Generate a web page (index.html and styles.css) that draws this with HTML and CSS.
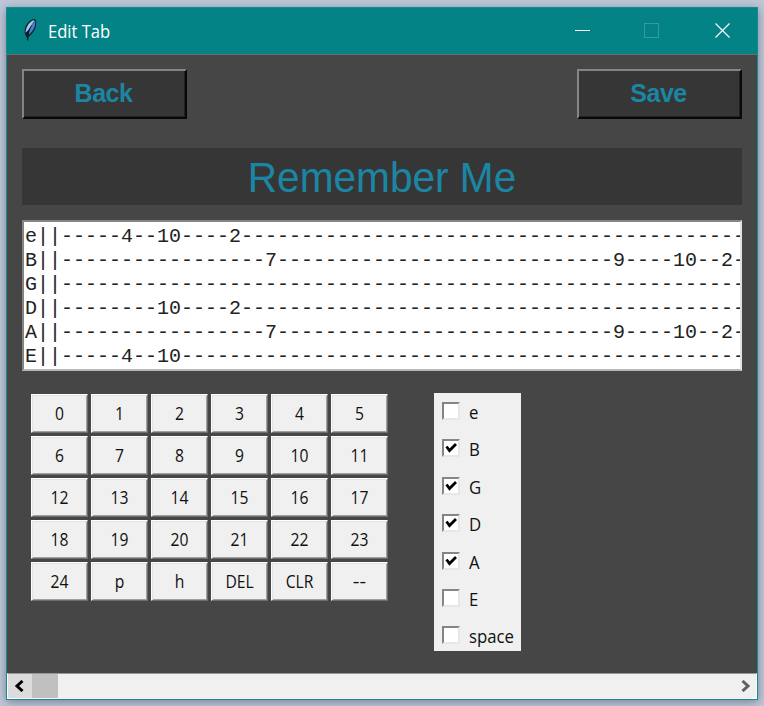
FILE: index.html
```html
<!DOCTYPE html>
<html lang="en">
<head>
<meta charset="utf-8">
<title>Edit Tab</title>
<link rel="stylesheet" href="styles.css">
</head>
<body>
<div class="window">
  <header class="titlebar">
    <svg class="feather" width="16" height="26" viewBox="0 0 16 26">
      <path d="M13 2 C15.500 4 14 12 11 15.500 C9 18 7.500 19 6.500 20 L6 25 L4.500 20 C2 17 2 11 5 7 C7 4 9.500 2 13 2Z" fill="#122330"/>
      <path d="M12.500 3 C8 4 4 9 3.500 15.500 C6 14 10 8 12.500 3Z" fill="#a9cbea"/>
      <path d="M13 3.500 C14 8 11.500 14 7 17.500 C7 12 9.500 8 13 3.500Z" fill="#4580d0"/>
      <path d="M10 8 C7.500 12 5.500 16 5.500 23" fill="none" stroke="#101820" stroke-width=".8"/>
    </svg>
    <span class="caption">Edit Tab</span>
    <svg class="controls" width="157" height="16" viewBox="0 0 157 16" fill="none">
      <path d="M0 7.500H15" stroke="#fff"/>
      <rect x="69.500" y=".5" width="14" height="14" stroke="#359c9e"/>
      <path d="M140.500 .5L154.500 14.500M154.500 .5L140.500 14.500" stroke="#fff" stroke-width="1.200"/>
    </svg>
  </header>
  <main class="content">
    <div class="actions">
      <button class="action">Back</button>
      <button class="action">Save</button>
    </div>
    <h1 class="song"><span>Remember Me</span></h1>
    <pre class="tab">e||-----4--10----2------------------------------------------
B||-----------------7----------------------------9----10--2-
G||---------------------------------------------------------
D||--------10----2------------------------------------------
A||-----------------7----------------------------9----10--2-
E||-----4--10-----------------------------------------------</pre>
    <div class="editor">
      <div class="keypad">
        <button><span>0</span></button><button><span>1</span></button><button><span>2</span></button><button><span>3</span></button><button><span>4</span></button><button><span>5</span></button>
        <button><span>6</span></button><button><span>7</span></button><button><span>8</span></button><button><span>9</span></button><button><span>10</span></button><button><span>11</span></button>
        <button><span>12</span></button><button><span>13</span></button><button><span>14</span></button><button><span>15</span></button><button><span>16</span></button><button><span>17</span></button>
        <button><span>18</span></button><button><span>19</span></button><button><span>20</span></button><button><span>21</span></button><button><span>22</span></button><button><span>23</span></button>
        <button><span>24</span></button><button><span>p</span></button><button><span>h</span></button><button><span>DEL</span></button><button><span>CLR</span></button><button><span class="dashes">--</span></button>
      </div>
      <div class="strings">
        <div class="string"><i class="box"></i><span>e</span></div>
        <div class="string"><i class="box"><svg viewBox="0 0 14 14"><path d="M2.500 5.500L5.500 9.500L12 3"/></svg></i><span>B</span></div>
        <div class="string"><i class="box"><svg viewBox="0 0 14 14"><path d="M2.500 5.500L5.500 9.500L12 3"/></svg></i><span>G</span></div>
        <div class="string"><i class="box"><svg viewBox="0 0 14 14"><path d="M2.500 5.500L5.500 9.500L12 3"/></svg></i><span>D</span></div>
        <div class="string"><i class="box"><svg viewBox="0 0 14 14"><path d="M2.500 5.500L5.500 9.500L12 3"/></svg></i><span>A</span></div>
        <div class="string"><i class="box"></i><span>E</span></div>
        <div class="string"><i class="box"></i><span>space</span></div>
      </div>
    </div>
  </main>
  <footer class="scrollbar">
    <div class="arrow left"><svg width="10" height="12" viewBox="0 0 10 12"><path d="M8.500 1L3 6L8.500 11"/></svg></div>
    <div class="thumb"></div>
    <div class="arrow right"><svg width="10" height="12" viewBox="0 0 10 12"><path d="M1.500 1L7 6L1.500 11"/></svg></div>
  </footer>
</div>
</body>
</html>
```
FILE: styles.css
```css
* { box-sizing: border-box; }
body {
  margin: 0;
  height: 706px;
  padding: 7px 6px 6px;
  overflow: hidden;
  background: #bfc8d8;
  font-family: "Open Sans", "Noto Sans", sans-serif;
}
.window {
  display: flex;
  flex-direction: column;
  width: 752px;
  height: 693px;
  border: 1px solid #168b8d;
  background: #464646;
  box-shadow: 0 2px 9px rgba(50, 60, 80, .5);
}
.titlebar {
  display: flex;
  align-items: center;
  height: 47px;
  padding-left: 15px;
  border-bottom: 1px solid #6e7070;
  background: #048387;
}
.feather { margin-top: -3px; }
.caption {
  margin: -1px 0 0 10px;
  color: #fff;
  font-size: 18px;
  line-height: 24px;
  transform: scaleX(.92);
  transform-origin: left;
}
.controls { margin-left: auto; margin-right: 25px; }
.content { flex: 1; padding: 14px 15px 0; }
.actions { display: flex; justify-content: space-between; }
.action {
  width: 165px;
  height: 50px;
  padding: 0 2px 2px 0;
  border: 2px solid;
  border-color: #858585 #080808 #080808 #858585;
  box-shadow: inset -1px -1px #222;
  background: #363636;
  color: #1b86a3;
  font: bold 25px "Liberation Sans", Arial, sans-serif;
  letter-spacing: -.5px;
}
.song {
  height: 57px;
  margin: 29px 0 15px;
  background: #363636;
  color: #1b86a3;
  font: 42px/59px "Liberation Sans", Arial, sans-serif;
  text-align: center;
}
.song span { display: block; transform: scaleX(.967); }
.tab {
  height: 151px;
  margin: 0;
  padding: 3px 0 0 1px;
  overflow: hidden;
  border: 2px solid;
  border-color: #858585 #e3e3e3 #b8b8b8 #858585;
  background: #fff;
  color: #222;
  font: 20px/24px "Liberation Mono", "Courier New", monospace;
}
.editor { display: flex; padding: 22px 0 0 9px; }
.keypad {
  display: grid;
  grid-template-columns: repeat(6, 57px);
  grid-auto-rows: 39px;
  gap: 3px;
  padding-top: 1px;
}
.keypad button {
  padding: 0 0 2px;
  border: 1px solid;
  border-color: #fff #6d6d6d #6d6d6d #fff;
  box-shadow: inset 1px 1px #e3e3e3, inset -1px -1px #a0a0a0;
  background: #f0f0f0;
  color: #111;
  font: 18px/24px "Open Sans", "Noto Sans", sans-serif;
}
.keypad span { display: block; transform: scaleX(.87); }
.keypad .dashes { transform: scaleX(1.15); }
.strings {
  display: grid;
  grid-auto-rows: 37.4px;
  width: 87px;
  height: 258px;
  margin-left: 46px;
  overflow: hidden;
  background: #f0f0f0;
}
.string {
  display: flex;
  gap: 9px;
  padding: 9px 0 0 8px;
  color: #111;
  font-size: 18px;
  line-height: 20px;
}
.string span { transform: scaleX(.93); transform-origin: left; }
.box {
  width: 18px;
  height: 18px;
  border: 2px solid;
  border-color: #858585 #e7e7e7 #e7e7e7 #858585;
  background: #fff;
}
.box svg { display: block; width: 14px; height: 14px; }
.box path { fill: none; stroke: #000; stroke-width: 2.8; }
.scrollbar {
  display: flex;
  height: 26px;
  border: 1px solid #fff;
  border-top-color: #969696;
  background: #f0f0f0;
}
.arrow { display: flex; align-items: center; justify-content: center; width: 24px; }
.arrow path { fill: none; stroke: #000; stroke-width: 3; }
.left { padding-right: 2px; background: #dcdcdc; }
.right { margin-left: auto; padding-left: 3px; }
.right path { stroke: #606060; }
.thumb { width: 26px; background: #c0c0c0; }
```
